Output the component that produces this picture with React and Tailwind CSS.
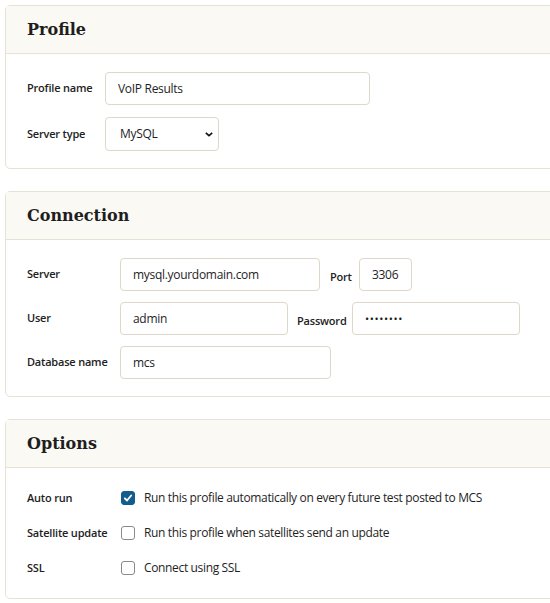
import { useState } from 'react';

const sans = { fontFamily: '"Open Sans", "Noto Sans", sans-serif' };

function Card({ title, children, className = '' }) {
  return (
    <section className={`ml-[5px] w-[560px] rounded-l-[5px] border border-[#e7e2d6] bg-white ${className}`}>
      <header className="flex h-[48px] items-center border-b border-[#e7e2d6] bg-[#fbf9f4] px-[21px]">
        <h2 className="text-[16px] font-bold text-[#1e1e1e]" style={{ fontFamily: '"DejaVu Serif", serif' }}>
          {title}
        </h2>
      </header>
      <div className="px-[21px]">{children}</div>
    </section>
  );
}

function Label({ children }) {
  return <span className="text-[11px] font-semibold tracking-[-0.2px] whitespace-nowrap text-[#222]">{children}</span>;
}

function Field({ value, width, type = 'text', className = 'text-[12px] tracking-[-0.3px]' }) {
  return (
    <input
      type={type}
      defaultValue={value}
      className={`h-[33px] rounded-[4px] border border-[#ddd8c9] bg-white px-[12px] text-[#1e1e1e] outline-none ${className}`}
      style={{ ...sans, width }}
    />
  );
}

function Check({ checked, onChange, label }) {
  return (
    <label className="flex h-[18px] cursor-pointer items-center gap-[9px]">
      <span
        onClick={onChange}
        className={`flex h-[14px] w-[14px] items-center justify-center rounded-[3px] border ${checked ? 'border-[#135c8e] bg-[#135c8e]' : 'border-[#8a8a8a] bg-white'}`}
      >
        {checked && (
          <svg viewBox="0 0 12 12" className="h-[10px] w-[10px]" fill="none" stroke="white" strokeWidth="2.2" strokeLinecap="round" strokeLinejoin="round">
            <path d="M2.2 6.4 4.8 9 9.8 3" />
          </svg>
        )}
      </span>
      <span className="whitespace-nowrap text-[12px] tracking-[-0.35px] text-[#1e1e1e]">{label}</span>
    </label>
  );
}

export default function App() {
  const [opts, setOpts] = useState({ auto: true, sat: false, ssl: false });
  const toggle = (k) => setOpts((o) => ({ ...o, [k]: !o[k] }));

  return (
    <div className="min-h-screen w-full overflow-hidden bg-white pt-[5px]" style={sans}>
      <Card title="Profile">
        <div className="grid grid-cols-[78px_auto] items-center gap-y-[12px] pt-[18px] pb-[17px]">
          <Label>Profile name</Label>
          <Field value="VoIP Results" width="265px" />
          <Label>Server type</Label>
          <div className="relative w-[114px]">
            <select
              defaultValue="MySQL"
              className="h-[34px] w-full appearance-none rounded-[4px] border border-[#ddd8c9] bg-white pl-[14px] text-[12px] tracking-[-0.3px] text-[#1e1e1e] outline-none"
              style={sans}
            >
              <option>MySQL</option>
              <option>PostgreSQL</option>
              <option>SQL Server</option>
            </select>
            <svg viewBox="0 0 10 6" className="pointer-events-none absolute right-[6px] top-[15px] h-[5px] w-[8px]" fill="none" stroke="#111" strokeWidth="2">
              <path d="M1 1l4 3.5L9 1" />
            </svg>
          </div>
        </div>
      </Card>

      <Card title="Connection" className="mt-[22px]">
        <div className="grid grid-cols-[93px_auto] items-center gap-y-[11px] pt-[18px] pb-[17px]">
          <Label>Server</Label>
          <div className="flex items-center">
            <Field value="mysql.yourdomain.com" width="200px" />
            <span className="ml-[10px] mr-[8px] w-[21px]"><Label>Port</Label></span>
            <Field value="3306" width="53px" />
          </div>
          <Label>User</Label>
          <div className="flex items-center">
            <Field value="admin" width="168px" />
            <span className="ml-[9px] mr-[9px] w-[46px]"><Label>Password</Label></span>
            <Field value="password" type="password" width="168px" className="text-[11px] tracking-[0.6px]" />
          </div>
          <Label>Database name</Label>
          <Field value="mcs" width="211px" />
        </div>
      </Card>

      <Card title="Options" className="mt-[22px]">
        <div className="grid grid-cols-[94px_auto] items-center gap-y-[17px] pt-[21px] pb-[21px]">
          <Label>Auto run</Label>
          <Check checked={opts.auto} onChange={() => toggle('auto')} label="Run this profile automatically on every future test posted to MCS" />
          <Label>Satellite update</Label>
          <Check checked={opts.sat} onChange={() => toggle('sat')} label="Run this profile when satellites send an update" />
          <Label>SSL</Label>
          <Check checked={opts.ssl} onChange={() => toggle('ssl')} label="Connect using SSL" />
        </div>
      </Card>
    </div>
  );
}
